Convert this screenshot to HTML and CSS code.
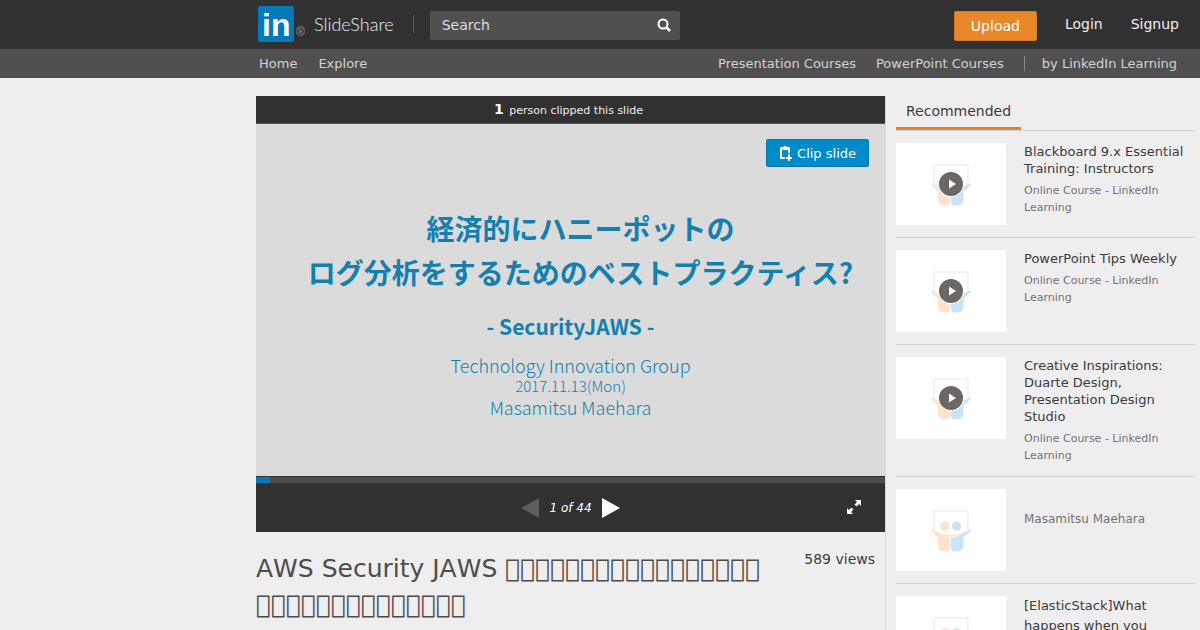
FILE: index.html
```html
<!DOCTYPE html>
<html lang="en">
<head>
    <meta charset="UTF-8">
    <meta name="viewport" content="width=device-width, initial-scale=1.0">
    <title>AWS Security JAWS</title>
    <link rel="stylesheet" href="styles.css">
</head>
<body>

    <!-- shared thumbnail artwork -->
    <svg class="sprite" aria-hidden="true">
        <symbol id="people" viewBox="0 0 42 44">
            <path d="M4 23V5q0-2 2-2h30q2 0 2 2v18" fill="none" stroke="#f1f2f3" stroke-width="2"/>
            <g fill="#fde3cd">
                <circle cx="15" cy="18" r="4.700"/>
                <path d="M1 22q0-1 1-.5l8 4q2 1 5 1h5v13q0 4-4 4h-2q-5 0-6-6v-8.500q-5-3-7-7z"/>
            </g>
            <g fill="#c9e4f6">
                <circle cx="26.500" cy="18" r="4.700"/>
                <path d="M41 22q0-1-1-.5l-8 4q-2 1-5 1l-6 1v12q0 4 4 4h2q6 0 6.500-6v-8.500q5-3 7.500-7z"/>
            </g>
            <path d="M16 27q6 4 13 0" fill="none" stroke="#fbecd8" stroke-width="2.500"/>
        </symbol>
        <symbol id="play" viewBox="0 0 26 26">
            <circle cx="13" cy="13" r="13" fill="#fff"/>
            <circle cx="13" cy="13" r="12" fill="#6b6764"/>
            <path d="M11 8.500l7 4.500-7 4.500z" fill="#fff"/>
        </symbol>
    </svg>

    <header class="topbar">
        <a class="logo" href="#" aria-label="LinkedIn SlideShare">
            <svg width="48" height="36" viewBox="0 0 48 36">
                <rect width="36" height="36" rx="2" fill="#0479b7"/>
                <text class="logo-in" x="4" y="30">in</text>
                <text class="logo-reg" x="38" y="30">®</text>
            </svg>
            <span class="logo-name">SlideShare</span>
        </a>
        <form class="search">
            <input type="text" placeholder="Search" aria-label="Search">
            <button type="button" aria-label="Submit search">
                <svg width="14" height="14" viewBox="0 0 14 14">
                    <circle cx="6" cy="6" r="4.500" fill="none" stroke="#fff" stroke-width="2"/>
                    <path d="M9 9l4 4" stroke="#fff" stroke-width="2.500"/>
                </svg>
            </button>
        </form>
        <div class="account">
            <button type="button" class="upload">Upload</button>
            <a href="#">Login</a>
            <a href="#">Signup</a>
        </div>
    </header>

    <nav class="subnav">
        <a href="#">Home</a>
        <a href="#">Explore</a>
        <div class="courses">
            <a href="#">Presentation Courses</a>
            <a href="#">PowerPoint Courses</a>
            <a href="#" class="learning">by LinkedIn Learning</a>
        </div>
    </nav>

    <div class="page">
        <main class="main">
            <section class="player">
                <div class="clip-count"><strong>1</strong> person clipped this slide</div>
                <div class="slide" lang="ja">
                    <button type="button" class="clip" lang="en">
                        <svg width="14" height="16" viewBox="0 0 14 16">
                            <path d="M6 13H2V3h8v5" fill="none" stroke="#fff" stroke-width="2"/>
                            <path d="M3 2h1.500V1h3v1H9v3H3zM9 9h2v3h2v2h-2v2H9v-2H7v-2h2z" fill="#fff"/>
                        </svg>
                        Clip slide
                    </button>
                    <h2 class="slide-title">経済的にハニーポットの<br>ログ分析をするためのベストプラクティス?</h2>
                    <p class="slide-event">- SecurityJAWS -</p>
                    <p class="slide-group">Technology Innovation Group</p>
                    <p class="slide-date">2017.11.13(Mon)</p>
                    <p class="slide-author">Masamitsu Maehara</p>
                </div>
                <div class="progress"><div class="progress-done" style="width: 2.27%;"></div></div>
                <div class="controls">
                    <button type="button" aria-label="Previous slide">
                        <svg width="18" height="20" viewBox="0 0 18 20"><path d="M18 0v20L0 10z" fill="#5d5d5d"/></svg>
                    </button>
                    <span class="position">1 of 44</span>
                    <button type="button" aria-label="Next slide">
                        <svg width="18" height="20" viewBox="0 0 18 20"><path d="M0 0v20l18-10z" fill="#fff"/></svg>
                    </button>
                    <button type="button" class="fullscreen" aria-label="Full screen">
                        <svg width="14" height="14" viewBox="0 0 14 14">
                            <path d="M8 0h6v6l-2-2-2.500 2.500-2-2L10 2zM6 14H0V8l2 2 2.500-2.500 2 2L4 12z" fill="#fff"/>
                        </svg>
                    </button>
                </div>
            </section>
            <div class="info">
                <h1>AWS Security JAWS &#x3FF00;&#x3FF00;&#x3FF00;&#x3FF00;&#x3FF00;&#x3FF00;&#x3FF00;&#x3FF00;&#x3FF00;&#x3FF00;&#x3FF00;&#x3FF00;&#x3FF00;&#x3FF00;&#x3FF00;&#x3FF00;&#x3FF00;&#x3FF00;&#x3FF00;&#x3FF00;&#x3FF00;&#x3FF00;&#x3FF00;&#x3FF00;&#x3FF00;&#x3FF00;&#x3FF00;&#x3FF00;&#x3FF00;&#x3FF00;&#x3FF00;</h1>
                <span class="views">589 views</span>
            </div>
        </main>

        <aside class="sidebar">
            <div class="tabs"><h2>Recommended</h2></div>
            <ul class="related">
                <li>
                    <a class="thumb" href="#" aria-label="Blackboard 9.x Essential Training: Instructors">
                        <svg class="people"><use href="#people"/></svg>
                        <svg class="play"><use href="#play"/></svg>
                    </a>
                    <div class="text">
                        <a href="#">Blackboard 9.x Essential Training: Instructors</a>
                        <p>Online Course - LinkedIn Learning</p>
                    </div>
                </li>
                <li>
                    <a class="thumb" href="#" aria-label="PowerPoint Tips Weekly">
                        <svg class="people"><use href="#people"/></svg>
                        <svg class="play"><use href="#play"/></svg>
                    </a>
                    <div class="text">
                        <a href="#">PowerPoint Tips Weekly</a>
                        <p>Online Course - LinkedIn Learning</p>
                    </div>
                </li>
                <li>
                    <a class="thumb" href="#" aria-label="Creative Inspirations: Duarte Design">
                        <svg class="people"><use href="#people"/></svg>
                        <svg class="play"><use href="#play"/></svg>
                    </a>
                    <div class="text">
                        <a href="#">Creative Inspirations: Duarte Design, Presentation Design Studio</a>
                        <p>Online Course - LinkedIn Learning</p>
                    </div>
                </li>
                <li>
                    <a class="thumb" href="#" aria-label="Masamitsu Maehara">
                        <svg class="people"><use href="#people"/></svg>
                    </a>
                    <div class="text deck untitled">
                        <p>Masamitsu Maehara</p>
                    </div>
                </li>
                <li>
                    <a class="thumb" href="#" aria-label="ElasticStack">
                        <svg class="people"><use href="#people"/></svg>
                    </a>
                    <div class="text deck">
                        <a href="#">[ElasticStack]What happens when you</a>
                    </div>
                </li>
            </ul>
        </aside>
    </div>

</body>
</html>
```
FILE: styles.css
```css
* {
    box-sizing: border-box;
}
body {
    margin: 0;
    background: #eee;
    color: #3b3b3b;
    font-family: "DejaVu Sans", sans-serif;
    font-size: 14px;
}
h1, h2, p, ul {
    margin: 0;
    padding: 0;
    font-weight: normal;
}
a {
    color: inherit;
    text-decoration: none;
}
button {
    border: 0;
    padding: 0;
    background: none;
    font: inherit;
    cursor: pointer;
}
svg {
    display: block;
}
.sprite {
    display: none;
}

/* header */
.topbar {
    display: flex;
    align-items: center;
    height: 49px;
    padding: 0 21px 2px 258px;
    background: #313131;
    color: #eee;
}
.logo {
    display: flex;
    align-items: center;
    gap: 8px;
}
.logo-in {
    font: bold 32px "Liberation Sans", sans-serif;
    fill: #fff;
}
.logo-reg {
    font: 12px "Liberation Sans", sans-serif;
    fill: #999;
}
.logo-name {
    padding-right: 19px;
    border-right: 1px solid #5a5a5a;
    font: 300 18px/18px Lato, sans-serif;
}
.search {
    display: flex;
    align-items: center;
    width: 250px;
    height: 29px;
    margin: 4px 0 0 16px;
    padding: 0 9px 2px 12px;
    border-radius: 2px;
    background: #505050;
}
.search input {
    flex: 1;
    min-width: 0;
    padding: 0;
    border: 0;
    background: none;
    color: #eee;
    font: inherit;
}
.search input::placeholder {
    color: #ddd;
}
.account {
    display: flex;
    align-items: center;
    gap: 28px;
    margin-left: auto;
}
.upload {
    height: 30px;
    margin-top: 4px;
    padding: 0 16px;
    border: 1px solid #d07a23;
    border-radius: 2px;
    background: #e98729;
    color: #fff;
}
.subnav {
    display: flex;
    align-items: center;
    gap: 21px;
    height: 29px;
    padding: 0 23px 0 259px;
    background: #505050;
    color: #d2d2d2;
    font-size: 13px;
}
.courses {
    display: flex;
    gap: 20px;
    margin-left: auto;
}
.learning {
    padding-left: 17px;
    border-left: 1px solid #888;
}

/* page */
.page {
    display: flex;
    padding: 18px 5px 0 256px;
}
.main {
    flex: 1;
    min-width: 0;
    border-right: 1px solid #d8d8d8;
}
.player {
    background: #313131;
    color: #fff;
}
.clip-count {
    height: 28px;
    padding-right: 4px;
    border-bottom: 1px solid #555;
    color: #eee;
    font-size: 11px;
    line-height: 26px;
    text-align: center;
}
.clip-count strong {
    margin-right: 2px;
    color: #fff;
    font-size: 14px;
}
.slide {
    position: relative;
    height: 352px;
    padding-top: 82px;
    background: #dbdbdb;
    color: #1380ae;
    font-family: "Noto Sans CJK JP", sans-serif;
    text-align: center;
}
.clip {
    position: absolute;
    top: 15px;
    right: 16px;
    display: flex;
    align-items: center;
    gap: 4px;
    height: 28px;
    padding: 0 12px;
    border: 1px solid #0b77a8;
    border-radius: 2px;
    background: #008ccb;
    color: #fff;
    font: 13px "DejaVu Sans", sans-serif;
}
.slide-title {
    padding-left: 20px;
    font-size: 28px;
    font-weight: bold;
    line-height: 44px;
    white-space: nowrap;
}
.slide-event {
    margin-top: 21px;
    font-size: 21px;
    font-weight: bold;
    line-height: 22px;
}
.slide-group,
.slide-author {
    margin-top: 17px;
    font-size: 18px;
    font-weight: 300;
    line-height: 22px;
}
.slide-date {
    font-size: 15px;
    font-weight: 300;
    line-height: 20px;
}
.slide-author {
    margin-top: 0;
}
.progress {
    height: 7px;
    border-top: 1px solid #313131;
    background: #4d4d4d;
}
.progress-done {
    height: 6px;
    background: #0479b7;
}
.controls {
    position: relative;
    display: flex;
    align-items: center;
    justify-content: center;
    gap: 10px;
    height: 49px;
}
.position {
    font-size: 12px;
    font-style: italic;
}
.fullscreen {
    position: absolute;
    top: 17px;
    right: 24px;
}
.info {
    display: flex;
    justify-content: space-between;
    gap: 36px;
    padding: 19px 10px 0 0;
}
.info h1 {
    color: #4d4d4d;
    font-size: 25px;
    font-kerning: none;
    line-height: 36px;
}
.views {
    line-height: 17px;
    white-space: nowrap;
}

/* recommended list */
.sidebar {
    width: 309px;
    padding-left: 10px;
}
.tabs {
    display: flex;
    height: 35px;
    border-bottom: 1px solid #d0d0d0;
}
.tabs h2 {
    padding: 0 10px;
    border-bottom: 3px solid #e08332;
    font-size: 14px;
    line-height: 31px;
}
.related {
    list-style: none;
}
.related li {
    display: flex;
    gap: 18px;
    padding: 12px 0;
    border-bottom: 1px solid #d0d0d0;
}
.thumb {
    display: grid;
    place-items: center;
    flex: none;
    width: 110px;
    height: 82px;
    background: #fff;
}
.thumb svg {
    grid-area: 1 / 1;
}
.people {
    width: 42px;
    height: 44px;
}
.play {
    width: 26px;
    height: 26px;
}
.text {
    font-size: 13px;
    line-height: 17px;
}
.text p {
    margin-top: 5px;
    color: #737373;
    font-size: 11px;
}
.deck {
    line-height: 20px;
}
.deck p {
    margin: 0;
    font-size: 12px;
}
.untitled {
    padding-top: 20px;
}
```
